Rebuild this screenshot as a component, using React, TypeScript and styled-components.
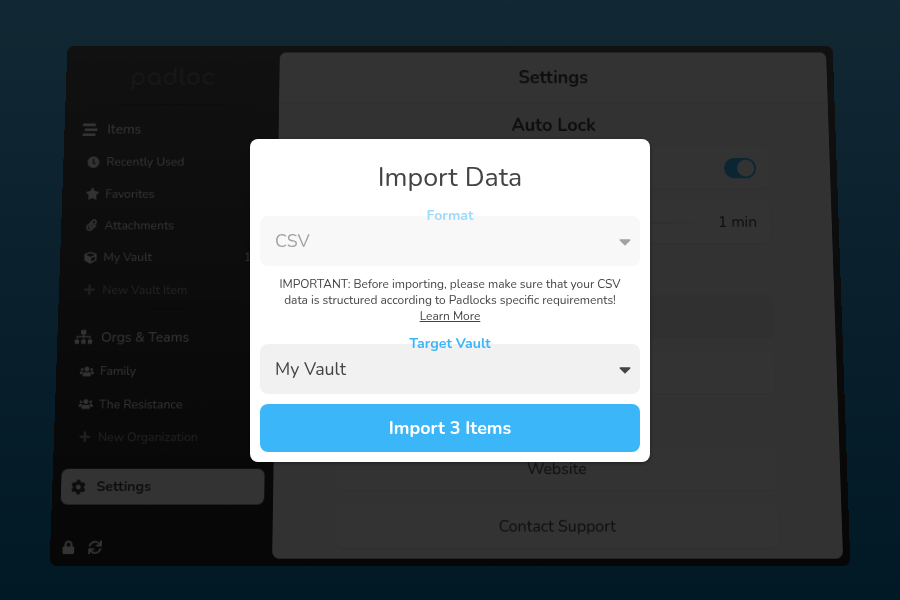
import React from 'react';
import styled, { createGlobalStyle } from 'styled-components';
import {
  FaCaretDown,
  FaClock,
  FaCog,
  FaCube,
  FaLock,
  FaPaperclip,
  FaPlus,
  FaSitemap,
  FaStar,
  FaStream,
  FaSync,
  FaUsers,
} from 'react-icons/fa';

const GlobalStyle = createGlobalStyle`
  * { box-sizing: border-box; }
  body {
    margin: 0;
    overflow: hidden;
    font-family: Nunito, Lato, sans-serif;
    color: #444;
  }
`;

const Page = styled.div`
  position: relative;
  width: 900px;
  height: 600px;
  overflow: hidden;
  perspective: 1000px;
  background: linear-gradient(180deg, #59c6ff, #077cb9);
`;

/* The app recedes behind an open dialog. */
const AppWindow = styled.div`
  display: flex;
  width: 900px;
  height: 600px;
  border-radius: 8px;
  overflow: hidden;
  background: linear-gradient(180deg, #555, #222);
  transform: translate3d(0, 0, -150px) rotateX(5deg);
`;

const Sidebar = styled.nav`
  width: 250px;
  display: flex;
  flex-direction: column;
  padding: 8px 10px 0;
  color: #fff;
`;

const Logo = styled.div`
  height: 60px;
  line-height: 62px;
  text-align: center;
  font-family: Comfortaa, Quicksand, Nunito, Lato, sans-serif;
  font-size: 26.5px;
  font-weight: 700;
  letter-spacing: 0.7px;
  opacity: 0.2;
`;

const Divider = styled.div<{ $gap: number }>`
  height: 2px;
  margin: 2px 10px ${p => p.$gap}px;
  background: linear-gradient(90deg, transparent, rgba(0, 0, 0, 0.2), transparent);
`;

const Group = styled.div`
  display: flex;
  align-items: center;
  height: 40px;
  padding-left: 10px;
  font-size: 16px;

  svg {
    width: 20px;
    height: 17px;
    margin-right: 10px;
  }
`;

const Entry = styled.div<{ $faint?: boolean }>`
  display: flex;
  align-items: center;
  height: 37.4px;
  padding: 0 11px 0 17px;
  font-size: 14px;
  opacity: ${p => (p.$faint ? 0.55 : 0.97)};

  svg {
    width: 16px;
    height: 14px;
    margin-right: 7px;
  }
`;

const Count = styled.span`
  margin-left: auto;
`;

const SettingsEntry = styled.div`
  display: flex;
  align-items: center;
  width: 230px;
  height: 40px;
  padding-left: 11px;
  border-radius: 8px;
  background: #fff;
  color: #444;
  font-size: 16px;
  font-weight: 700;

  svg {
    width: 17px;
    height: 17px;
    margin-right: 12px;
  }
`;

const SidebarFooter = styled.div`
  display: flex;
  align-items: center;
  gap: 15px;
  margin: auto 0 13px 2.5px;

  svg {
    width: 15px;
    height: 15px;
  }
`;

const Main = styled.main`
  width: 642px;
  height: 584px;
  margin-top: 8px;
  border-radius: 8px;
  overflow: hidden;
  background: #fafafa;
`;

const MainHeader = styled.header`
  height: 60px;
  line-height: 60px;
  text-align: center;
  font-size: 21.2px;
  font-weight: 700;
  background: #fff;
  box-shadow: 0 1px 2px rgba(0, 0, 0, 0.08);
`;

const Panels = styled.div`
  display: flex;
  flex-direction: column;
  width: 500px;
  margin: 0 auto;
`;

const SectionTitle = styled.h2`
  height: 53px;
  margin: 0;
  line-height: 55px;
  text-align: center;
  font-size: 21px;
  font-weight: 700;
`;

const Box = styled.div<{ $dark?: boolean; $end?: boolean }>`
  display: flex;
  flex: none;
  align-items: center;
  justify-content: ${p => (p.$end ? 'flex-end' : 'center')};
  height: 49px;
  margin-bottom: 15px;
  padding: 0 15.5px;
  border-radius: 8px;
  background: ${p => (p.$dark ? '#eee' : '#fdfdfd')};
  box-shadow: 0 1px 2px rgba(0, 0, 0, 0.09);
  font-size: 18px;
`;

const Toggle = styled.div`
  display: flex;
  justify-content: flex-end;
  width: 37px;
  height: 24px;
  padding: 2px;
  border-radius: 12px;
  background: #3bb7f9;
`;

const Knob = styled.div`
  width: 20px;
  height: 20px;
  border-radius: 50%;
  background: #fff;
`;

const SliderTrack = styled.div`
  flex: 1;
  height: 2px;
  margin-right: 13px;
  background: linear-gradient(90deg, #ccc 70%, transparent);
`;

const SliderValue = styled.span`
  padding-bottom: 2px;
`;

const Scrim = styled.div`
  position: absolute;
  inset: 0;
  display: flex;
  align-items: center;
  justify-content: center;
  background: rgba(0, 0, 0, 0.8);
`;

const Dialog = styled.section`
  display: flex;
  flex-direction: column;
  width: 400px;
  height: 323px;
  padding: 0 10px 10px;
  border-radius: 8px;
  background: #fff;
  box-shadow: 0 1px 4px rgba(0, 0, 0, 0.4);
`;

const DialogTitle = styled.h1`
  height: 77px;
  margin: 0;
  line-height: 77px;
  text-align: center;
  font-size: 26.8px;
  font-weight: 400;
`;

const Select = styled.div<{ $disabled?: boolean }>`
  position: relative;
  display: flex;
  align-items: center;
  justify-content: space-between;
  height: 50px;
  padding: 0 9px 0 15px;
  border-radius: 8px;
  background: #f1f1f1;
  font-size: 17.8px;
  opacity: ${p => (p.$disabled ? 0.5 : 1)};

  svg {
    width: 12px;
    height: 19px;
    margin-top: 2px;
  }
`;

const SelectLabel = styled.label`
  position: absolute;
  top: -9px;
  left: 0;
  right: 0;
  line-height: 18px;
  text-align: center;
  font-size: 14.2px;
  font-weight: 700;
  color: #3bb7f9;
`;

const Notice = styled.p`
  height: 78px;
  margin: 0;
  padding-top: 10px;
  line-height: 16px;
  text-align: center;
  font-size: 11.95px;
`;

const PrimaryButton = styled.button`
  height: 48px;
  margin-top: 10px;
  padding: 0;
  border: 0;
  border-radius: 8px;
  background: #3bb7f9;
  color: #fff;
  font: 700 17.9px Nunito, Lato, sans-serif;
`;

const WideGap = styled.div`
  flex: none;
  height: 45px;
`;

export default function App() {
  return (
    <Page>
      <GlobalStyle />
      <AppWindow>
        <Sidebar>
          <Logo>padloc</Logo>
          <Divider $gap={8} />
          <Group><FaStream />Items</Group>
          <Entry><FaClock />Recently Used</Entry>
          <Entry><FaStar />Favorites</Entry>
          <Entry><FaPaperclip />Attachments</Entry>
          <Entry><FaCube />My Vault<Count>15</Count></Entry>
          <Entry $faint><FaPlus />New Vault Item</Entry>
          <Divider $gap={12} />
          <Group><FaSitemap />Orgs &amp; Teams</Group>
          <Entry><FaUsers />Family</Entry>
          <Entry><FaUsers />The Resistance</Entry>
          <Entry $faint><FaPlus />New Organization</Entry>
          <Divider $gap={13} />
          <SettingsEntry><FaCog />Settings</SettingsEntry>
          <SidebarFooter><FaLock /><FaSync /></SidebarFooter>
        </Sidebar>
        <Main>
          <MainHeader>Settings</MainHeader>
          <Panels>
            <SectionTitle>Auto Lock</SectionTitle>
            <Box $end><Toggle><Knob /></Toggle></Box>
            <Box $end><SliderTrack /><SliderValue>1 min</SliderValue></Box>
            <WideGap />
            <Box $dark />
            <Box />
            <WideGap />
            <Box>Website</Box>
            <Box>Contact Support</Box>
          </Panels>
        </Main>
      </AppWindow>
      <Scrim>
        <Dialog>
          <DialogTitle>Import Data</DialogTitle>
          <Select $disabled>
            <SelectLabel>Format</SelectLabel>
            CSV
            <FaCaretDown />
          </Select>
          <Notice>
            IMPORTANT: Before importing, please make sure that your CSV
            <br />
            data is structured according to Padlocks specific requirements!
            <br />
            <u>Learn More</u>
          </Notice>
          <Select>
            <SelectLabel>Target Vault</SelectLabel>
            My Vault
            <FaCaretDown />
          </Select>
          <PrimaryButton>Import 3 Items</PrimaryButton>
        </Dialog>
      </Scrim>
    </Page>
  );
}
